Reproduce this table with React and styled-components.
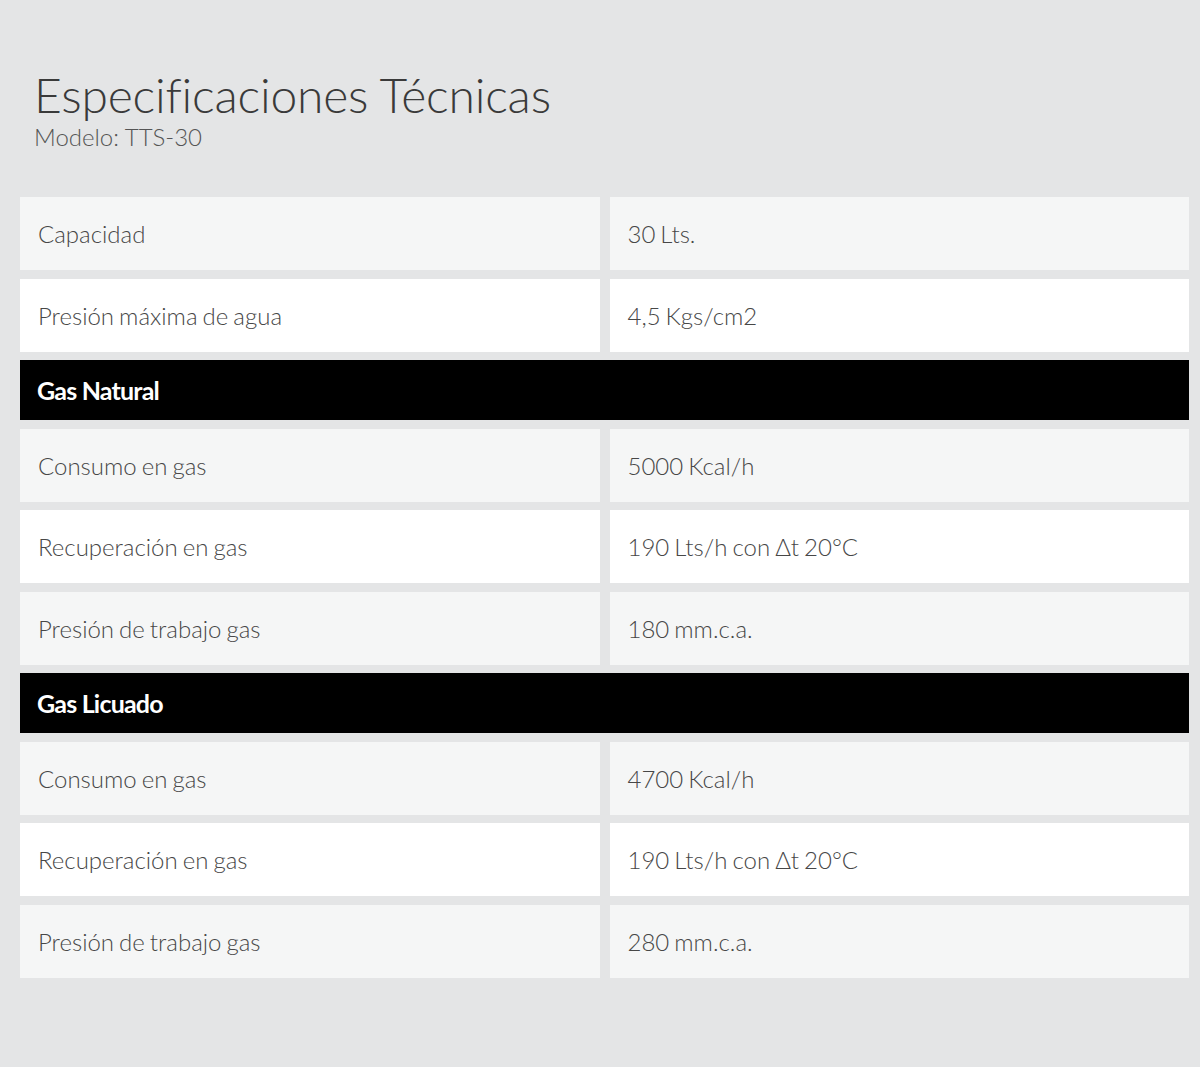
import React from "react";
import styled, { createGlobalStyle } from "styled-components";

const GlobalStyle = createGlobalStyle`
  html, body {
    margin: 0;
    padding: 0;
    background: #e4e5e6;
  }
  body {
    font-family: Lato, "Open Sans", sans-serif;
  }
`;

const Page = styled.div`
  min-height: 1067px;
  padding: 66px 11px 0 20px;
  box-sizing: border-box;
`;

const Heading = styled.div`
  padding-left: 14px;
  margin-bottom: 47px;
`;

const Title = styled.h1`
  margin: 0;
  font-weight: 300;
  font-size: 48px;
  line-height: 58px;
  letter-spacing: -0.2px;
  color: #3a3a3a;
`;

const Subtitle = styled.div`
  font-weight: 300;
  font-size: 24px;
  line-height: 26px;
  color: #555;
`;

const Table = styled.div`
  display: grid;
  grid-template-columns: 1fr 1fr;
  column-gap: 10px;
  row-gap: 8.5px;
`;

const Cell = styled.div`
  height: 73px;
  display: flex;
  align-items: center;
  padding-left: 18px;
  background: ${({ $white }) => ($white ? "#ffffff" : "#f5f6f6")};
  font-weight: 300;
  font-size: 24px;
  word-spacing: -1.5px;
  color: #474747;
`;

const GroupHeader = styled.div`
  grid-column: 1 / -1;
  height: 60px;
  display: flex;
  align-items: center;
  padding-left: 17px;
  background: #000;
  color: #fff;
  font-weight: 700;
  font-size: 25px;
  letter-spacing: -0.8px;
`;

const sections = [
  {
    title: null,
    rows: [
      ["Capacidad", "30 Lts."],
      ["Presión máxima de agua", "4,5 Kgs/cm2"],
    ],
  },
  {
    title: "Gas Natural",
    rows: [
      ["Consumo en gas", "5000 Kcal/h"],
      ["Recuperación en gas", "190 Lts/h con Δt 20°C"],
      ["Presión de trabajo gas", "180 mm.c.a."],
    ],
  },
  {
    title: "Gas Licuado",
    rows: [
      ["Consumo en gas", "4700 Kcal/h"],
      ["Recuperación en gas", "190 Lts/h con Δt 20°C"],
      ["Presión de trabajo gas", "280 mm.c.a."],
    ],
  },
];

const App = () => {
  return (
    <Page>
      <GlobalStyle />
      <Heading>
        <Title>Especificaciones Técnicas</Title>
        <Subtitle>Modelo: TTS-30</Subtitle>
      </Heading>
      <Table>
        {sections.map((section, s) => (
          <React.Fragment key={s}>
            {section.title && <GroupHeader>{section.title}</GroupHeader>}
            {section.rows.map(([label, value], i) => (
              <React.Fragment key={label + i}>
                <Cell $white={i % 2 === 1}>{label}</Cell>
                <Cell $white={i % 2 === 1}>{value}</Cell>
              </React.Fragment>
            ))}
          </React.Fragment>
        ))}
      </Table>
    </Page>
  );
};

export default App;
